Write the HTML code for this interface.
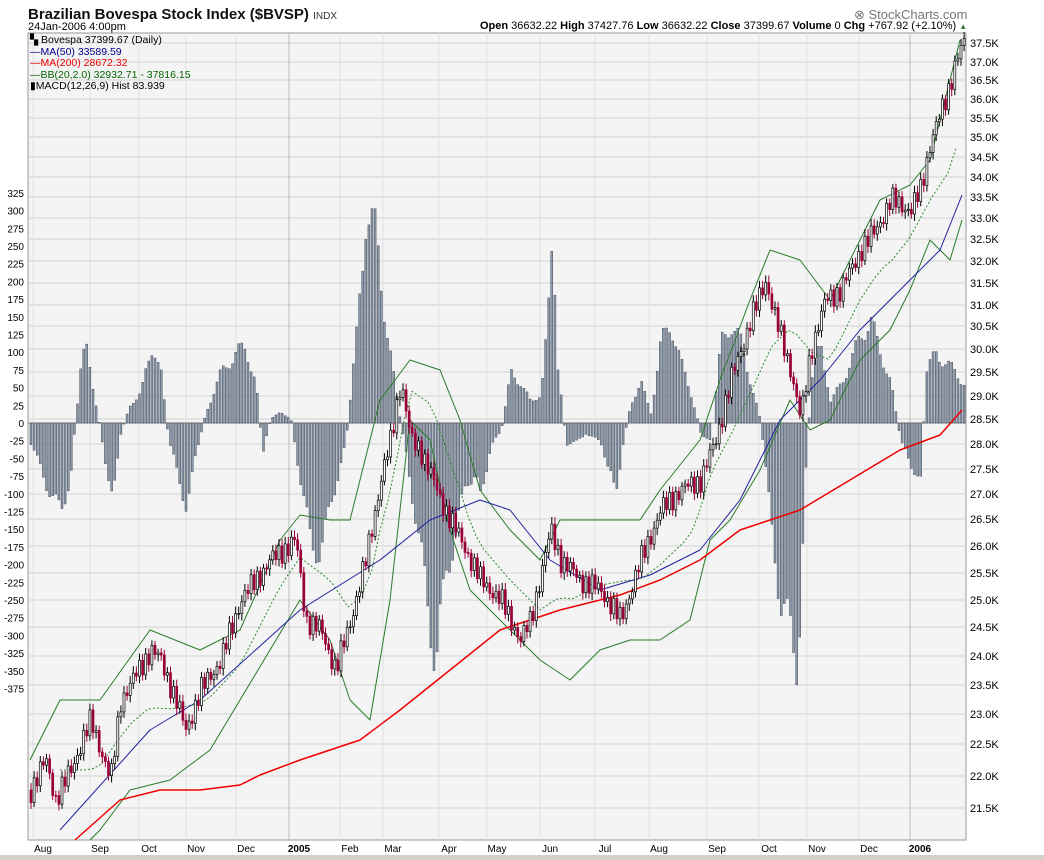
<!DOCTYPE html>
<html><head><meta charset="utf-8"><style>
html,body{margin:0;padding:0;background:#fff;width:1044px;height:860px;overflow:hidden;font-family:"Liberation Sans",sans-serif}
.t{position:absolute;white-space:nowrap}
</style></head><body>
<div class="t" style="left:28px;top:6px;font-size:15px;font-weight:bold;color:#111">Brazilian Bovespa Stock Index ($BVSP) <span style="font-size:10px;font-weight:normal;color:#333">INDX</span></div>
<div class="t" style="left:28px;top:21px;font-size:11px;color:#000">24Jan-2006 4:00pm</div>
<div class="t" style="left:854px;top:7px;font-size:13px;color:#777">⊗ StockCharts.com</div>
<div class="t" style="left:480px;top:20px;font-size:11px;color:#000"><b>Open</b> 36632.22 <b>High</b> 37427.76 <b>Low</b> 36632.22 <b>Close</b> 37399.67 <b>Volume</b> 0 <b>Chg</b> +767.92 (+2.10%) <span style="color:#3a7a3a;font-size:8px">▲</span></div>
<svg id="s" width="1044" height="860" style="position:absolute;left:0;top:0"></svg>
<div class="t" style="left:30px;top:35px;font-size:10.5px;line-height:11.5px;background:transparent">
<div style="color:#000">▚ Bovespa 37399.67 (Daily)</div>
<div style="color:#00008b">—MA(50) 33589.59</div>
<div style="color:#e00">—MA(200) 28672.32</div>
<div style="color:#006400">—BB(20,2.0) 32932.71 - 37816.15</div>
<div style="color:#000">▮MACD(12,26,9) Hist 83.939</div>
</div>
<div style="position:absolute;left:0;top:855px;width:1044px;height:5px;background:#d4d0c8"></div>
<script>
var S=document.getElementById('s'),h='';
var L=28,R=966,T=33,B=840;
h+='<rect x="'+L+'" y="'+T+'" width="'+(R-L)+'" height="'+(B-T)+'" fill="#f4f4f4" stroke="#999"/>';
var px=[[37.5,43],[37.0,62],[36.5,80],[36.0,99],[35.5,118],[35.0,137],[34.5,157],[34.0,177],[33.5,197],[33.0,218],[32.5,239],[32.0,261],[31.5,283],[31.0,305],[30.5,326],[30.0,349],[29.5,372],[29.0,396],[28.5,419],[28.0,444],[27.5,469],[27.0,494],[26.5,519],[26.0,546],[25.5,573],[25.0,600],[24.5,627],[24.0,656],[23.5,685],[23.0,714],[22.5,744],[22.0,776],[21.5,808]];
px.forEach(function(p){h+='<line x1="'+L+'" x2="'+R+'" y1="'+p[1]+'" y2="'+p[1]+'" stroke="#d2d2d2"/>';h+='<text x="970" y="'+(p[1]+4)+'" font-size="11" fill="#000">'+p[0].toFixed(1)+'K</text>';});
for(var v=325;v>=-375;v-=25){var y=423-v*0.708;h+='<text x="24" y="'+(y+4)+'" font-size="10" text-anchor="end" fill="#000">'+v+'</text>';}
var mo=[["Aug",43],["Sep",100],["Oct",149],["Nov",196],["Dec",246],["2005",299,1],["Feb",350],["Mar",393],["Apr",449],["May",497],["Jun",550],["Jul",605],["Aug",659],["Sep",717],["Oct",769],["Nov",817],["Dec",869],["2006",920,1]];
mo.forEach(function(m){var gx=m[1]-10;h+='<line x1="'+gx+'" x2="'+gx+'" y1="'+T+'" y2="'+B+'" stroke="'+(m[2]?'#bbb':'#e0e0e0')+'"/>';h+='<text x="'+m[1]+'" y="852" font-size="10" text-anchor="middle" '+(m[2]?'font-weight="bold"':'')+' fill="#000">'+m[0]+'</text>';});
function interp(k,x){for(var i=0;i<k.length-1;i++){if(x>=k[i][0]&&x<=k[i+1][0]){var f=(x-k[i][0])/(k[i+1][0]-k[i][0]);return k[i][1]+f*(k[i+1][1]-k[i][1]);}}return x<k[0][0]?k[0][1]:k[k.length-1][1];}
var mac=[[30,-20],[45,-60],[60,-90],[70,-50],[80,60],[85,75],[95,20],[105,-40],[112,-80],[120,-10],[130,20],[140,30],[152,80],[160,50],[168,-20],[180,-60],[186,-90],[195,-30],[205,10],[220,50],[235,70],[245,75],[255,40],[262,-30],[270,5],[280,10],[290,5],[300,-60],[310,-120],[320,-130],[330,-80],[345,-20],[355,80],[365,210],[375,190],[385,100],[395,30],[405,-30],[420,-130],[435,-240],[445,-150],[455,-110],[465,-60],[475,-50],[480,-80],[490,-20],[500,-10],[510,50],[520,40],[530,20],[540,30],[547,100],[552,190],[557,60],[565,-20],[575,-20],[585,-10],[600,-20],[610,-50],[615,-80],[622,-20],[630,20],[640,40],[650,10],[660,80],[670,100],[680,60],[690,30],[700,-10],[710,-20],[720,80],[730,100],[740,80],[750,40],[760,0],[770,-100],[780,-180],[790,-210],[797,-240],[805,-50],[810,40],[820,80],[830,20],[840,40],[850,60],[860,90],[870,100],[880,70],[890,40],[900,-20],[910,-40],[920,-60],[925,50],[935,70],[945,60],[955,50],[963,40]];
h+='<line x1="'+L+'" x2="'+R+'" y1="423" y2="423" stroke="#888"/>';
for(var x=30;x<964;x+=3.1){var v=interp(mac,x)*(1+0.12*Math.sin(x*1.7));if(v>=0)h+='<rect x="'+x.toFixed(1)+'" y="'+(423-v).toFixed(1)+'" width="2" height="'+v.toFixed(1)+'" fill="#8899aa" stroke="#334" stroke-width="0.4"/>';else h+='<rect x="'+x.toFixed(1)+'" y="423" width="2" height="'+(-v).toFixed(1)+'" fill="#8899aa" stroke="#334" stroke-width="0.4"/>';}
function pl(k,c,w,d){var p=k.map(function(q){return q[0]+','+q[1]}).join(' ');h+='<polyline points="'+p+'" fill="none" stroke="'+c+'" stroke-width="'+w+'" '+(d?'stroke-dasharray="2,2"':'')+' stroke-linejoin="round"/>';}
var up=[[30,760],[60,700],[100,700],[150,630],[200,650],[240,630],[280,540],[300,515],[330,520],[350,520],[380,400],[410,360],[440,370],[460,420],[480,490],[510,530],[540,560],[560,520],[600,520],[640,520],[660,490],[700,440],[720,380],[750,300],[770,250],[800,260],[830,300],[860,240],[880,200],[910,185],[930,160],[960,40]];
var lo=[[90,840],[100,830],[130,790],[170,780],[210,750],[240,700],[270,650],[300,600],[330,640],[350,700],[370,720],[390,600],[410,420],[430,440],[450,530],[470,590],[500,620],[540,660],[570,680],[600,650],[630,640],[660,640],[690,620],[710,540],[730,520],[760,470],[790,400],[810,430],[830,420],[860,360],[890,330],[910,290],[930,240],[950,260],[962,220]];
var mid=[];for(var x=60;x<=962;x+=8){mid.push([x,(interp(up,x)+interp(lo,x))/2]);}
pl(up,'#2a7a2a',1);pl(lo,'#2a7a2a',1);pl(mid,'#2a8a2a',1,1);
pl([[75,840],[120,800],[160,790],[200,790],[240,785],[260,775],[300,760],[360,740],[400,710],[450,670],[500,630],[560,610],[620,595],[660,580],[700,560],[740,530],[800,510],[850,480],[900,450],[940,435],[962,410]],'#e00',1.5);
pl([[60,830],[150,730],[200,700],[300,610],[380,560],[430,520],[480,500],[510,510],[550,560],[600,590],[650,575],[700,550],[740,500],[780,420],[820,380],[860,330],[900,290],[940,250],[962,195]],'#2020a0',1);
var pr=[[30,790],[45,760],[55,800],[70,770],[90,720],[110,780],[120,700],[150,650],[160,660],[175,700],[185,730],[200,690],[220,660],[240,600],[270,560],[295,540],[305,620],[320,630],[335,670],[350,620],[365,560],[380,480],[390,440],[400,380],[410,440],[420,450],[440,500],[460,540],[480,580],[500,600],[520,640],[530,620],[550,530],[560,560],[580,580],[600,590],[620,620],[640,560],[660,510],[680,490],[700,480],[715,440],[730,380],[750,320],[765,280],[775,320],[790,370],[800,420],[810,350],[825,300],[840,290],[860,250],[875,230],[890,200],[910,210],[920,190],[930,140],[945,100],[955,60],[962,45]];
var prev=interp(pr,30);
for(var x=30;x<964;x+=3.1){var c=interp(pr,x)+9*Math.sin(x*0.9)+4*Math.cos(x*2.3);var o=prev;var hi=Math.min(o,c)-4-3*Math.abs(Math.sin(x*3.1)),lw=Math.max(o,c)+4+3*Math.abs(Math.cos(x*2.7));var col=c>o?'#99003a':'#000';h+='<line x1="'+(x+1)+'" x2="'+(x+1)+'" y1="'+hi+'" y2="'+lw+'" stroke="'+col+'"/>';h+='<rect x="'+x.toFixed(1)+'" y="'+Math.min(o,c).toFixed(1)+'" width="2" height="'+Math.max(1,Math.abs(c-o)).toFixed(1)+'" fill="'+(c>o?'#99003a':'#fff')+'" stroke="'+col+'" stroke-width="0.7"/>';prev=c;}
S.innerHTML=h;
</script>
</body></html>
